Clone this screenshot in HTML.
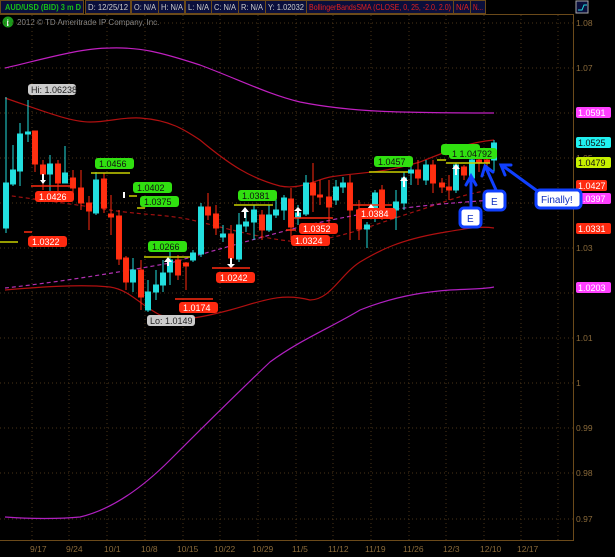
<!DOCTYPE html>
<html><head><meta charset="utf-8"><style>
html,body{margin:0;padding:0;background:#000;width:615px;height:557px;overflow:hidden}
svg{display:block;font-family:"Liberation Sans",sans-serif}
</style></head><body>
<svg width="615" height="557" viewBox="0 0 615 557" xmlns="http://www.w3.org/2000/svg">
<rect width="615" height="557" fill="#000"/>
<!-- header -->
<g font-size="8.5">
<rect x="0.5" y="0.5" width="83" height="13" fill="#0a0f3c" stroke="#6b4a1a"/>
<text x="5" y="10" fill="#18c018" font-weight="bold" textLength="76" lengthAdjust="spacingAndGlyphs">AUD/USD (BID) 3 m D</text>
<rect x="85.5" y="0.5" width="45" height="13" fill="#0a0f3c" stroke="#6b4a1a"/><text x="88" y="10" fill="#ccc" textLength="40" lengthAdjust="spacingAndGlyphs">D: 12/25/12</text>
<rect x="131.5" y="0.5" width="27" height="13" fill="#0a0f3c" stroke="#6b4a1a"/><text x="134" y="10" fill="#ccc" textLength="22" lengthAdjust="spacingAndGlyphs">O: N/A</text>
<rect x="158.5" y="0.5" width="26" height="13" fill="#0a0f3c" stroke="#6b4a1a"/><text x="161" y="10" fill="#ccc" textLength="22" lengthAdjust="spacingAndGlyphs">H: N/A</text>
<rect x="185.5" y="0.5" width="26" height="13" fill="#0a0f3c" stroke="#6b4a1a"/><text x="188" y="10" fill="#ccc" textLength="21" lengthAdjust="spacingAndGlyphs">L: N/A</text>
<rect x="211.5" y="0.5" width="27" height="13" fill="#0a0f3c" stroke="#6b4a1a"/><text x="214" y="10" fill="#ccc" textLength="22" lengthAdjust="spacingAndGlyphs">C: N/A</text>
<rect x="238.5" y="0.5" width="27" height="13" fill="#0a0f3c" stroke="#6b4a1a"/><text x="241" y="10" fill="#ccc" textLength="22" lengthAdjust="spacingAndGlyphs">R: N/A</text>
<rect x="265.5" y="0.5" width="41" height="13" fill="#0a0f3c" stroke="#6b4a1a"/><text x="268" y="10" fill="#ccc" textLength="36" lengthAdjust="spacingAndGlyphs">Y: 1.02032</text>
<rect x="306.5" y="0.5" width="147" height="13" fill="#0a0f3c" stroke="#6b4a1a"/><text x="309" y="10" fill="#e02020" textLength="142" lengthAdjust="spacingAndGlyphs">BollingerBandsSMA (CLOSE, 0, 25, -2.0, 2.0)</text>
<rect x="453.5" y="0.5" width="17" height="13" fill="#0a0f3c" stroke="#6b4a1a"/><text x="456" y="10" fill="#e02020" textLength="13" lengthAdjust="spacingAndGlyphs">N/A</text>
<rect x="470.5" y="0.5" width="15" height="13" fill="#0a0f3c" stroke="#6b4a1a"/><text x="473" y="10" fill="#e02020" textLength="10" lengthAdjust="spacingAndGlyphs">N...</text>
<rect x="576" y="1" width="12" height="12" fill="#0a0f3c" stroke="#aaa"/>
<path d="M578 10 L582 10 L584 5 L587 5" stroke="#2dd" fill="none"/>
</g>
<line x1="0" y1="14.5" x2="573" y2="14.5" stroke="#6b4a1a"/>
<circle cx="8" cy="22" r="5.5" fill="#1a9a1a"/><text x="6.5" y="26" fill="#fff" font-size="9" font-weight="bold">i</text>
<text x="17" y="25" fill="#888" font-size="8">2012 © TD Ameritrade IP Company, Inc.</text>
<!-- grid -->
<g stroke="#4a3418" stroke-dasharray="1,3">
<line x1="0" y1="23" x2="573" y2="23"/><line x1="0" y1="68" x2="573" y2="68"/><line x1="0" y1="113" x2="573" y2="113"/><line x1="0" y1="158" x2="573" y2="158"/><line x1="0" y1="203" x2="573" y2="203"/><line x1="0" y1="248" x2="573" y2="248"/><line x1="0" y1="293" x2="573" y2="293"/><line x1="0" y1="338" x2="573" y2="338"/><line x1="0" y1="383" x2="573" y2="383"/><line x1="0" y1="428" x2="573" y2="428"/><line x1="0" y1="473" x2="573" y2="473"/><line x1="0" y1="519" x2="573" y2="519"/>
<line x1="32" y1="15" x2="32" y2="540"/><line x1="69" y1="15" x2="69" y2="540"/><line x1="107" y1="15" x2="107" y2="540"/><line x1="145" y1="15" x2="145" y2="540"/><line x1="183" y1="15" x2="183" y2="540"/><line x1="220" y1="15" x2="220" y2="540"/><line x1="258" y1="15" x2="258" y2="540"/><line x1="296" y1="15" x2="296" y2="540"/><line x1="333" y1="15" x2="333" y2="540"/><line x1="371" y1="15" x2="371" y2="540"/><line x1="409" y1="15" x2="409" y2="540"/><line x1="446" y1="15" x2="446" y2="540"/><line x1="484" y1="15" x2="484" y2="540"/><line x1="521" y1="15" x2="521" y2="540"/><line x1="558" y1="15" x2="558" y2="540"/>
</g>
<line x1="573.5" y1="14" x2="573.5" y2="541" stroke="#6b4a1a"/>
<line x1="0" y1="540.5" x2="574" y2="540.5" stroke="#6b4a1a"/>
<g fill="#8a6a3a" font-size="8.5">
<text x="576" y="26">1.08</text><text x="576" y="71">1.07</text><text x="576" y="161">1.05</text><text x="576" y="251">1.03</text><text x="576" y="341">1.01</text><text x="576" y="386">1</text><text x="576" y="431">0.99</text><text x="576" y="476">0.98</text><text x="576" y="522">0.97</text>
<text x="30" y="552">9/17</text><text x="66" y="552">9/24</text><text x="104" y="552">10/1</text><text x="141" y="552">10/8</text><text x="177" y="552">10/15</text><text x="214" y="552">10/22</text><text x="252" y="552">10/29</text><text x="292" y="552">11/5</text><text x="328" y="552">11/12</text><text x="365" y="552">11/19</text><text x="403" y="552">11/26</text><text x="443" y="552">12/3</text><text x="480" y="552">12/10</text><text x="517" y="552">12/17</text>
</g>
<!-- bands -->
<g fill="none" stroke-width="1.2">
<path d="M5 68 C40 60 80 48 110 48 C140 47 160 52 200 65 C240 80 270 95 300 102 C350 112 400 113 494 113" stroke="#c020c0"/>
<path d="M5 98 C40 110 70 122 90 122 C110 122 120 117 140 118 C170 120 185 130 200 140 C230 165 250 178 280 186 C300 190 315 180 330 177 C360 172 380 174 420 162 C450 150 470 142 494 140" stroke="#b01010"/>
<path d="M5 195 C40 200 80 205 110 210 C150 216 170 214 200 222 C240 232 270 240 300 242 C340 240 380 222 420 210 C450 200 470 192 494 190" stroke="#a01010" stroke-dasharray="4,3"/>
<path d="M5 288 C60 282 120 272 170 263 C210 252 250 240 300 227 C350 215 400 206 494 200" stroke="#b030b0" stroke-dasharray="4,3"/>
<path d="M5 290 C40 287 80 284 110 287 C130 290 140 305 160 315 C180 322 200 318 230 310 C260 302 280 292 310 300 C330 300 340 275 360 262 C380 250 400 240 440 233 C470 228 480 226 494 228" stroke="#b01010"/>
<path d="M5 517 C30 519 60 519 80 517 C110 510 140 490 170 460 C200 430 230 400 270 362 C300 340 330 328 360 310 C390 298 420 292 450 290 C470 289 485 289 494 287" stroke="#b020c0"/>
</g>
<g>
<g stroke="#22dddd" fill="#22e0e0">
<line x1="6" y1="97" x2="6" y2="233"/><rect x="3.5" y="183" width="5" height="45"/>
<line x1="13" y1="145" x2="13" y2="186"/><rect x="10.5" y="170" width="5" height="14"/>
<line x1="20" y1="123" x2="20" y2="186"/><rect x="17.5" y="134" width="5" height="37"/>
<line x1="28" y1="100" x2="28" y2="142"/><rect x="25.5" y="132" width="5" height="2"/>
<line x1="50" y1="155" x2="50" y2="200"/><rect x="47.5" y="164" width="5" height="10"/>
<line x1="65" y1="146" x2="65" y2="183"/><rect x="62.5" y="173" width="5" height="10"/>
<line x1="96" y1="172" x2="96" y2="215"/><rect x="93.5" y="180" width="5" height="33"/>
<line x1="133" y1="258" x2="133" y2="292"/><rect x="130.5" y="270" width="5" height="12"/>
<line x1="148" y1="280" x2="148" y2="312"/><rect x="145.5" y="292" width="5" height="18"/>
<line x1="156" y1="270" x2="156" y2="300"/><rect x="153.5" y="285" width="5" height="7"/>
<line x1="163" y1="260" x2="163" y2="292"/><rect x="160.5" y="273" width="5" height="12"/>
<line x1="170" y1="252" x2="170" y2="285"/><rect x="167.5" y="260" width="5" height="12"/>
<line x1="193" y1="250" x2="193" y2="262"/><rect x="190.5" y="253" width="5" height="7"/>
<line x1="201" y1="203" x2="201" y2="257"/><rect x="198.5" y="207" width="5" height="47"/>
<line x1="223" y1="225" x2="223" y2="242"/><rect x="220.5" y="234" width="5" height="3"/>
<line x1="239" y1="213" x2="239" y2="262"/><rect x="236.5" y="225" width="5" height="34"/>
<line x1="246" y1="210" x2="246" y2="232"/><rect x="243.5" y="222" width="5" height="4"/>
<line x1="254" y1="205" x2="254" y2="240"/><rect x="251.5" y="210" width="5" height="12"/>
<line x1="269" y1="205" x2="269" y2="232"/><rect x="266.5" y="215" width="5" height="15"/>
<line x1="276" y1="198" x2="276" y2="218"/><rect x="273.5" y="210" width="5" height="5"/>
<line x1="284" y1="195" x2="284" y2="220"/><rect x="281.5" y="198" width="5" height="12"/>
<line x1="298" y1="205" x2="298" y2="225"/><rect x="295.5" y="213" width="5" height="4"/>
<line x1="306" y1="175" x2="306" y2="216"/><rect x="303.5" y="183" width="5" height="31"/>
<line x1="336" y1="180" x2="336" y2="205"/><rect x="333.5" y="187" width="5" height="13"/>
<line x1="343" y1="177" x2="343" y2="193"/><rect x="340.5" y="183" width="5" height="4"/>
<line x1="367" y1="222" x2="367" y2="248"/><rect x="364.5" y="225" width="5" height="4"/>
<line x1="375" y1="190" x2="375" y2="222"/><rect x="372.5" y="193" width="5" height="20"/>
<line x1="396" y1="190" x2="396" y2="230"/><rect x="393.5" y="202" width="5" height="8"/>
<line x1="404" y1="172" x2="404" y2="210"/><rect x="401.5" y="178" width="5" height="25"/>
<line x1="411" y1="165" x2="411" y2="185"/><rect x="408.5" y="170" width="5" height="3"/>
<line x1="426" y1="160" x2="426" y2="185"/><rect x="423.5" y="165" width="5" height="15"/>
<line x1="456" y1="163" x2="456" y2="193"/><rect x="453.5" y="165" width="5" height="25"/>
<line x1="472" y1="158" x2="472" y2="180"/><rect x="469.5" y="160" width="5" height="18"/>
<line x1="494" y1="140" x2="494" y2="172"/><rect x="491.5" y="143" width="5" height="17"/>
</g>
<g stroke="#ff2a10" fill="#ff3010">
<line x1="35" y1="131" x2="35" y2="172"/><rect x="32.5" y="131" width="5" height="33"/>
<line x1="43" y1="160" x2="43" y2="190"/><rect x="40.5" y="165" width="5" height="9"/>
<line x1="58" y1="160" x2="58" y2="200"/><rect x="55.5" y="164" width="5" height="19"/>
<line x1="73" y1="170" x2="73" y2="200"/><rect x="70.5" y="178" width="5" height="10"/>
<line x1="81" y1="170" x2="81" y2="210"/><rect x="78.5" y="188" width="5" height="15"/>
<line x1="89" y1="196" x2="89" y2="230"/><rect x="86.5" y="203" width="5" height="8"/>
<line x1="104" y1="173" x2="104" y2="213"/><rect x="101.5" y="179" width="5" height="29"/>
<line x1="111" y1="195" x2="111" y2="235"/><rect x="108.5" y="214" width="5" height="3"/>
<line x1="119" y1="210" x2="119" y2="265"/><rect x="116.5" y="216" width="5" height="43"/>
<line x1="126" y1="256" x2="126" y2="290"/><rect x="123.5" y="258" width="5" height="24"/>
<line x1="141" y1="260" x2="141" y2="310"/><rect x="138.5" y="270" width="5" height="27"/>
<line x1="178" y1="255" x2="178" y2="280"/><rect x="175.5" y="260" width="5" height="15"/>
<line x1="186" y1="262" x2="186" y2="290"/><rect x="183.5" y="263" width="5" height="3"/>
<line x1="208" y1="193" x2="208" y2="220"/><rect x="205.5" y="207" width="5" height="8"/>
<line x1="216" y1="205" x2="216" y2="235"/><rect x="213.5" y="214" width="5" height="14"/>
<line x1="231" y1="225" x2="231" y2="265"/><rect x="228.5" y="234" width="5" height="24"/>
<line x1="262" y1="210" x2="262" y2="240"/><rect x="259.5" y="215" width="5" height="15"/>
<line x1="291" y1="188" x2="291" y2="240"/><rect x="288.5" y="199" width="5" height="28"/>
<line x1="313" y1="163" x2="313" y2="212"/><rect x="310.5" y="183" width="5" height="12"/>
<line x1="320" y1="180" x2="320" y2="205"/><rect x="317.5" y="195" width="5" height="2"/>
<line x1="329" y1="180" x2="329" y2="233"/><rect x="326.5" y="197" width="5" height="10"/>
<line x1="350" y1="175" x2="350" y2="240"/><rect x="347.5" y="183" width="5" height="27"/>
<line x1="359" y1="200" x2="359" y2="240"/><rect x="356.5" y="210" width="5" height="19"/>
<line x1="382" y1="185" x2="382" y2="220"/><rect x="379.5" y="190" width="5" height="20"/>
<line x1="418" y1="160" x2="418" y2="185"/><rect x="415.5" y="170" width="5" height="8"/>
<line x1="433" y1="160" x2="433" y2="193"/><rect x="430.5" y="165" width="5" height="18"/>
<line x1="442" y1="178" x2="442" y2="193"/><rect x="439.5" y="183" width="5" height="4"/>
<line x1="449" y1="175" x2="449" y2="200"/><rect x="446.5" y="187" width="5" height="3"/>
<line x1="464" y1="165" x2="464" y2="180"/><rect x="461.5" y="167" width="5" height="8"/>
<line x1="479" y1="155" x2="479" y2="172"/><rect x="476.5" y="160" width="5" height="2"/>
<line x1="487" y1="155" x2="487" y2="167"/><rect x="484.5" y="160" width="5" height="2"/>
</g>
</g>
<!-- level lines -->
<g stroke-width="1.5">
<line x1="0" y1="242" x2="18" y2="242" stroke="#c8d000"/>
<line x1="91" y1="173" x2="130" y2="173" stroke="#c8d000"/>
<line x1="129" y1="196" x2="137" y2="196" stroke="#c8d000"/>
<line x1="137" y1="208" x2="145" y2="208" stroke="#c8d000"/>
<line x1="144" y1="257" x2="190" y2="257" stroke="#c8d000"/>
<line x1="234" y1="205" x2="273" y2="205" stroke="#c8d000"/>
<line x1="369" y1="172" x2="408" y2="172" stroke="#c8d000"/>
<line x1="437" y1="160" x2="446" y2="160" stroke="#c8d000"/>
<line x1="446" y1="163" x2="490" y2="163" stroke="#c8d000"/>
<line x1="31" y1="186" x2="70" y2="186" stroke="#ff2a10"/>
<line x1="24" y1="232" x2="32" y2="232" stroke="#ff2a10"/>
<line x1="175" y1="299" x2="213" y2="299" stroke="#ff2a10"/>
<line x1="212" y1="268" x2="250" y2="268" stroke="#ff2a10"/>
<line x1="294" y1="218" x2="333" y2="218" stroke="#ff2a10"/>
<line x1="286" y1="230" x2="296" y2="230" stroke="#ff2a10"/>
<line x1="350" y1="205" x2="392" y2="205" stroke="#ff2a10"/>
</g>
<!-- arrows -->
<g fill="#fff">
<rect x="42" y="174" width="2" height="6"/><path d="M40 180 h6 l-3 4 z"/>
<rect x="167" y="260" width="2" height="6"/><path d="M164 262 h8 l-4 -5 z"/>
<rect x="230" y="258" width="2" height="6"/><path d="M227 264 h8 l-4 4 z"/>
<rect x="244" y="211" width="2" height="7"/><path d="M241 212 h8 l-4 -5 z"/>
<rect x="297" y="210" width="2" height="6"/><path d="M294 211 h8 l-4 -4 z"/>
<rect x="123" y="192" width="2" height="6"/>
<rect x="370" y="208" width="2" height="8"/><path d="M367 209 h8 l-4 -5 z"/>
<rect x="403" y="180" width="2" height="7"/><path d="M400 181 h8 l-4 -5 z"/>
<rect x="455" y="168" width="2" height="7"/><path d="M452 169 h8 l-4 -5 z"/>
</g>
<!-- labels -->
<g font-size="9">
<rect x="28" y="84" width="48" height="11" rx="3" fill="#ccc"/><text x="31" y="93" fill="#222">Hi: 1.06238</text>
<rect x="147" y="315" width="48" height="11" rx="3" fill="#ccc"/><text x="150" y="324" fill="#222">Lo: 1.0149</text>
<g fill="#30e010"><rect x="95" y="158" width="39" height="11" rx="3"/><rect x="133" y="182" width="39" height="11" rx="3"/><rect x="140" y="196" width="39" height="11" rx="3"/><rect x="148" y="241" width="39" height="11" rx="3"/><rect x="238" y="190" width="39" height="11" rx="3"/><rect x="374" y="156" width="39" height="11" rx="3"/><rect x="441" y="144" width="39" height="11" rx="3"/><rect x="449" y="148" width="48" height="11" rx="3"/></g>
<g fill="#111"><text x="99" y="167">1.0456</text><text x="137" y="191">1.0402</text><text x="144" y="205">1.0375</text><text x="152" y="250">1.0266</text><text x="242" y="199">1.0381</text><text x="378" y="165">1.0457</text><text x="452" y="157">1 1.04792</text></g>
<g fill="#ff2a10"><rect x="35" y="191" width="39" height="11" rx="3"/><rect x="28" y="236" width="39" height="11" rx="3"/><rect x="179" y="302" width="39" height="11" rx="3"/><rect x="216" y="272" width="39" height="11" rx="3"/><rect x="299" y="223" width="39" height="11" rx="3"/><rect x="291" y="235" width="39" height="11" rx="3"/><rect x="357" y="208" width="39" height="11" rx="3"/></g>
<g fill="#fff"><text x="39" y="200">1.0426</text><text x="32" y="245">1.0322</text><text x="183" y="311">1.0174</text><text x="220" y="281">1.0242</text><text x="303" y="232">1.0352</text><text x="295" y="244">1.0324</text><text x="361" y="217">1.0384</text></g>
<rect x="576" y="107" width="35" height="11" rx="2" fill="#ff40ff"/><text x="578" y="116" fill="#fff">1.0591</text>
<rect x="576" y="137" width="35" height="11" rx="2" fill="#20f0f0"/><text x="578" y="146" fill="#111">1.0525</text>
<rect x="576" y="157" width="35" height="11" rx="2" fill="#c8f000"/><text x="578" y="166" fill="#111">1.0479</text>
<rect x="576" y="180" width="31" height="11" rx="2" fill="#ff2a10"/><text x="578" y="189" fill="#fff">1.0427</text>
<rect x="576" y="193" width="35" height="11" rx="2" fill="#ff40ff"/><text x="578" y="202" fill="#fff">1.0397</text>
<rect x="576" y="223" width="35" height="11" rx="2" fill="#ff2a10"/><text x="578" y="232" fill="#fff">1.0331</text>
<rect x="576" y="282" width="35" height="11" rx="2" fill="#ff40ff"/><text x="578" y="291" fill="#fff">1.0203</text>
</g>
<!-- callouts -->
<g stroke="#1040ff" stroke-width="3" fill="none" stroke-linecap="round">
<path d="M471 208 L471 178 M466 185 L471 176 L476 185"/>
<path d="M496 190 L486 168 M482 176 L485 166 L493 172"/>
<path d="M536 190 L503 166 M505 175 L501 165 L511 165"/>
</g>
<g font-size="10">
<rect x="460" y="208" width="21" height="19" rx="4" fill="#fff" stroke="#1040ff" stroke-width="3"/><text x="467" y="222" fill="#1030c0">E</text>
<rect x="484" y="191" width="21" height="19" rx="4" fill="#fff" stroke="#1040ff" stroke-width="3"/><text x="491" y="205" fill="#1030c0">E</text>
<rect x="536" y="190" width="45" height="18" rx="4" fill="#fff" stroke="#1040ff" stroke-width="3"/><text x="541" y="203" fill="#1030c0">Finally!</text>
</g>
</svg>
</body></html>
